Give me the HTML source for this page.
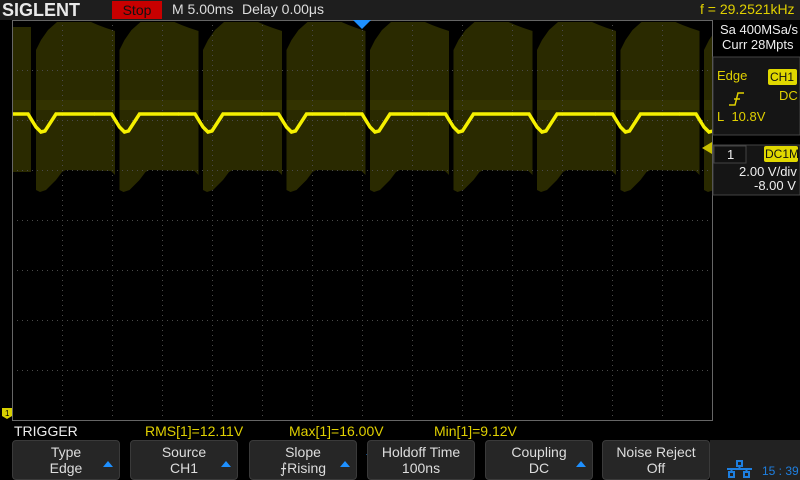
<!DOCTYPE html>
<html><head><meta charset="utf-8"><style>
*{margin:0;padding:0;box-sizing:border-box}
body{width:800px;height:480px;background:#000;overflow:hidden;position:relative;font-family:"Liberation Sans",sans-serif;color:#ddd}
.t{position:absolute;white-space:nowrap}
.btn{position:absolute;top:440px;width:108px;height:40px;background:#262626;border:1px solid #3a3a3a;border-radius:4px;text-align:center;font-size:14px;line-height:16px;color:#ddd;padding-top:3px}
.ar{position:absolute;right:6px;top:20px;width:0;height:0;border-left:5px solid transparent;border-right:5px solid transparent;border-bottom:6px solid #1e90ff}
</style></head><body>
<div style="position:absolute;left:0;top:0;width:800px;height:20px;background:#1e1e1e"></div>
<div class="t" style="left:2px;top:0px;font-size:18px;font-weight:bold;color:#e8e8e8;transform:scaleX(1.0);transform-origin:left">SIGLENT</div>
<div class="t" style="left:112px;top:1px;width:50px;height:18px;background:#c80000;color:#111;font-size:14px;text-align:center;line-height:18px">Stop</div>
<div class="t" style="left:172px;top:1px;font-size:14px;color:#ddd">M 5.00ms</div>
<div class="t" style="left:242px;top:1px;font-size:14px;color:#ddd">Delay 0.00μs</div>
<div class="t" style="left:700px;top:1px;font-size:14px;color:#e0d000">f = 29.2521kHz</div>

<svg style="position:absolute;left:0;top:0" width="800" height="480">
<defs>
<clipPath id="c"><rect x="12" y="20" width="700" height="400"/></clipPath>
<g id="blk"><polygon fill="#2a2a00" points="0,50 5,40 12,30 21,22 55,22 62,25 70,28 79,31 79,175 75,171 30,170 26,172 20,180 10,190 4,192 0,190"/>
<rect x="0" y="100" width="79" height="10" fill="#333300"/></g>
<path id="tr" d="M-20,114 L-3,114 L5,127 L10,132 L14,131 L25,114 L64,114" fill="none" stroke="#f5f000" stroke-width="3.5"/>
</defs>
<g clip-path="url(#c)">
<polygon fill="#2a2a00" points="12,27 31,27 31,172 12,172"/>
<rect x="12" y="100" width="19" height="10" fill="#333300"/>
<use href="#blk" x="36"/><use href="#blk" x="119.5"/><use href="#blk" x="203"/><use href="#blk" x="286.5"/><use href="#blk" x="370"/><use href="#blk" x="453.5"/><use href="#blk" x="537"/><use href="#blk" x="620.5"/><use href="#blk" x="704"/>
<g stroke="#4a4a4a" stroke-width="1" stroke-dasharray="1,4">
<line x1="62.5" y1="20" x2="62.5" y2="420"/><line x1="112.5" y1="20" x2="112.5" y2="420"/><line x1="162.5" y1="20" x2="162.5" y2="420"/><line x1="212.5" y1="20" x2="212.5" y2="420"/><line x1="262.5" y1="20" x2="262.5" y2="420"/><line x1="312.5" y1="20" x2="312.5" y2="420"/><line x1="362.5" y1="20" x2="362.5" y2="420"/><line x1="412.5" y1="20" x2="412.5" y2="420"/><line x1="462.5" y1="20" x2="462.5" y2="420"/><line x1="512.5" y1="20" x2="512.5" y2="420"/><line x1="562.5" y1="20" x2="562.5" y2="420"/><line x1="612.5" y1="20" x2="612.5" y2="420"/><line x1="662.5" y1="20" x2="662.5" y2="420"/>
<line x1="12" y1="70.5" x2="712" y2="70.5"/><line x1="12" y1="120.5" x2="712" y2="120.5"/><line x1="12" y1="170.5" x2="712" y2="170.5"/><line x1="12" y1="220.5" x2="712" y2="220.5"/><line x1="12" y1="270.5" x2="712" y2="270.5"/><line x1="12" y1="320.5" x2="712" y2="320.5"/><line x1="12" y1="370.5" x2="712" y2="370.5"/>
</g>
<use href="#tr" x="31"/><use href="#tr" x="114.5"/><use href="#tr" x="198"/><use href="#tr" x="281.5"/><use href="#tr" x="365"/><use href="#tr" x="448.5"/><use href="#tr" x="532"/><use href="#tr" x="615.5"/><use href="#tr" x="699"/>
</g>
<rect x="12.5" y="20.5" width="700" height="400" fill="none" stroke="#666" stroke-width="1"/>
<polygon points="353,20 371,20 362,29" fill="#1e90ff"/>
<polygon points="702,148 712,142 712,154" fill="#c8c000"/>
<polygon points="2,408 12,408 12,416 7,419 2,416" fill="#d8d000"/>
<text x="5" y="416" font-size="8" fill="#000" font-family="Liberation Sans">1</text>
<rect x="713" y="57" width="87" height="78" fill="#151515" stroke="#444"/>
<rect x="713" y="145" width="87" height="50" fill="#151515" stroke="#444"/>
<rect x="714" y="146" width="32" height="17" fill="#111" stroke="#444"/>
<rect x="764" y="146" width="34" height="16" rx="2" fill="#e0d800"/>
<rect x="768" y="69" width="29" height="16" rx="2" fill="#e0d800"/>
<path d="M729,105 L735,105 L738,93 L744,93 M734,99 L740,99" stroke="#e0d000" stroke-width="1.5" fill="none"/>
<rect x="710" y="440" width="90" height="40" fill="#222"/>
<g fill="none" stroke="#1e7fe0" stroke-width="2"><rect x="737" y="461" width="5" height="5"/><rect x="729" y="472" width="5" height="5"/><rect x="744" y="472" width="5" height="5"/><path d="M739.5,466 V469 M727,469 H752 M731.5,469 V472 M746.5,469 V472"/></g>
<path d="M373,457 a5,5 0 1 0 4,-2" stroke="#1e90ff" stroke-width="1.6" fill="none"/>
<path d="M366,454 l4,0 0,4z" fill="#1e90ff"/>
</svg>
<div class="t" style="left:720px;top:22px;font-size:13px;color:#eee">Sa 400MSa/s</div>
<div class="t" style="left:722px;top:37px;font-size:13px;color:#eee">Curr 28Mpts</div>
<div class="t" style="left:717px;top:68px;font-size:13px;color:#e0d000">Edge</div>
<div class="t" style="left:770px;top:70px;font-size:12px;color:#111">CH1</div>
<div class="t" style="left:779px;top:88px;font-size:13px;color:#e0d000">DC</div>
<div class="t" style="left:717px;top:109px;font-size:13px;color:#e0d000">L&nbsp; 10.8V</div>
<div class="t" style="left:727px;top:147px;font-size:13px;color:#eee">1</div>
<div class="t" style="left:765px;top:147px;font-size:12px;color:#111">DC1M</div>
<div class="t" style="left:739px;top:164px;font-size:13px;color:#eee">2.00 V/div</div>
<div class="t" style="left:754px;top:178px;font-size:13px;color:#eee">-8.00 V</div>

<div class="t" style="left:14px;top:423px;font-size:14px;color:#eee">TRIGGER</div>
<div class="t" style="left:145px;top:423px;font-size:14px;color:#e0d000">RMS[1]=12.11V</div>
<div class="t" style="left:289px;top:423px;font-size:14px;color:#e0d000">Max[1]=16.00V</div>
<div class="t" style="left:434px;top:423px;font-size:14px;color:#e0d000">Min[1]=9.12V</div>

<div class="btn" style="left:12px">Type<br>Edge<div class="ar"></div></div>
<div class="btn" style="left:130px">Source<br>CH1<div class="ar"></div></div>
<div class="btn" style="left:249px">Slope<br>⨍Rising<div class="ar"></div></div>
<div class="btn" style="left:367px">Holdoff Time<br>100ns</div>
<div class="btn" style="left:485px">Coupling<br>DC<div class="ar"></div></div>
<div class="btn" style="left:602px">Noise Reject<br>Off</div>
<div class="t" style="left:762px;top:464px;font-size:12px;color:#1e7fe0">15 : 39</div>
</body></html>
